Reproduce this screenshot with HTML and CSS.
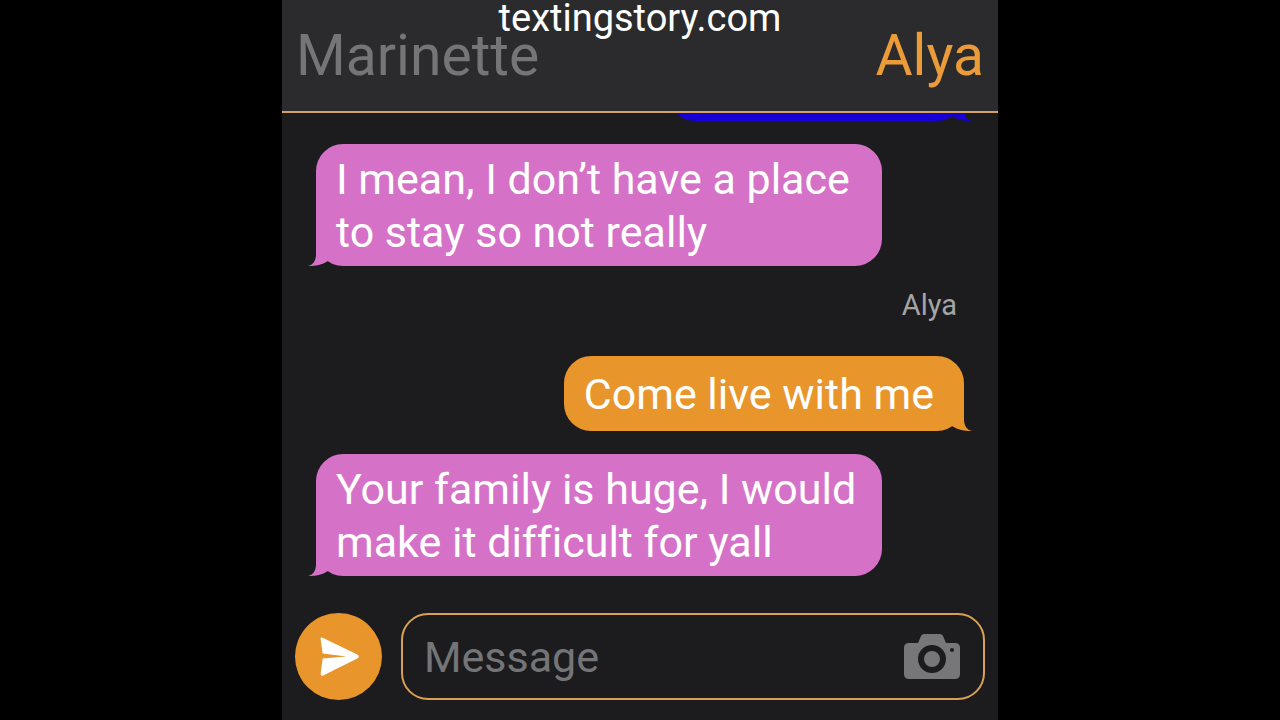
FILE: index.html
```html
<!DOCTYPE html>
<html lang="en">
<head>
  <meta charset="UTF-8" />
  <meta name="viewport" content="width=device-width, initial-scale=1.0" />
  <title>TextingStory</title>
  <link rel="stylesheet" href="styles.css">
</head>
<body>
  <div class="phone">
    <header class="header">
      <button class="name" type="button">Marinette</button>
      <button class="name active" type="button">Alya</button>
      <div class="watermark">textingstory.com</div>
    </header>

    <!-- Messages -->
    <main class="chat">
      <div class="bubble right blue"></div>
      <div class="bubble left pink"><p>I mean, I don’t have a place to stay so not really</p></div>
      <div class="sender">Alya</div>
      <div class="bubble right orange"><p>Come live with me</p></div>
      <div class="bubble left pink"><p>Your family is huge, I would make it difficult for yall</p></div>
    </main>

    <!-- Composer -->
    <form class="composer">
      <button class="send" type="button" aria-label="Send">
        <svg viewBox="0 0 88 88">
          <path d="M28 25 Q25 24 26 27 L28 41 L52 44 L28 46 L26 61 Q26 65 29 63 L63 46 Q66 44 63 42 Z" fill="#fff"/>
        </svg>
      </button>
      <div class="message-box">
        <input type="text" placeholder="Message" aria-label="Message">
        <button class="camera" type="button" aria-label="Camera">
          <svg viewBox="0 0 56 46" width="56" height="46">
            <path d="M5 9 H14 L17 2 Q18 0 20 0 H36 Q38 0 39 2 L42 9 H51 Q56 9 56 14 V40 Q56 45 51 45 H5 Q0 45 0 40 V14 Q0 9 5 9 Z" fill="#77777a"/>
            <circle cx="28" cy="25" r="11" fill="#77777a" stroke="#1c1c1e" stroke-width="6"/>
            <circle cx="48" cy="16" r="2" fill="#1c1c1e"/>
          </svg>
        </button>
      </div>
    </form>
  </div>
</body>
</html>
```
FILE: styles.css
```css
* {
  box-sizing: border-box;
}
body {
  font-family: Roboto, "Liberation Sans", sans-serif;
  font-variant-ligatures: none;
  background: #000;
  margin: 0;
}
button {
  font-family: inherit;
  padding: 0;
  border: none;
  background: none;
  cursor: pointer;
}
.phone {
  display: flex;
  flex-direction: column;
  max-width: 716px;
  height: 100vh;
  margin: 0 auto;
  background: #1c1c1e;
}
.header {
  position: relative;
  display: flex;
  justify-content: space-between;
  padding: 19px 14px 18px;
  background: #2b2b2d;
  border-bottom: 2px solid #d2a165;
}
.name {
  font-size: 57px;
  line-height: 74px;
  color: #757577;
}
.name.active {
  color: #eb9b38;
}
.watermark {
  position: absolute;
  top: 0;
  left: 0;
  right: 0;
  font-size: 38px;
  line-height: 36px;
  text-align: center;
  color: #fff;
}
.chat {
  flex: 1;
  min-height: 0;
  display: flex;
  flex-direction: column;
  justify-content: flex-end;
  gap: 23px;
  padding: 0 34px;
  overflow: hidden;
}
.bubble {
  position: relative;
  flex-shrink: 0;
  display: flex;
  align-items: center;
  max-width: 566px;
  min-height: 75px;
  padding: 9px 12px 7px 20px;
  border-radius: 27px;
  font-size: 43px;
  line-height: 53px;
  color: #fff;
}
.bubble p {
  margin: 0;
}
/* tail */
.bubble::after {
  content: "";
  position: absolute;
  bottom: 0;
  left: -8px;
  width: 24px;
  height: 28px;
  background: inherit;
  clip-path: path("M8 0 V16 C8 23 5 27 0 28 C8 28 14 27 20 23 L24 0 Z");
}
.left {
  align-self: flex-start;
}
.right {
  align-self: flex-end;
  padding-right: 30px;
}
.right::after {
  left: auto;
  right: -8px;
  transform: scaleX(-1);
}
.pink {
  background: #d572c8;
}
.orange {
  background: #e8952c;
}
.blue {
  width: 296px;
  background: #1600d5;
}
.sender {
  align-self: flex-end;
  padding: 0 7px 12px 0;
  font-size: 29px;
  line-height: 32px;
  color: #a5a5a8;
}
.composer {
  display: flex;
  gap: 19px;
  padding: 37px 13px 20px;
}
.send {
  flex-shrink: 0;
  width: 87px;
  height: 87px;
  border-radius: 50%;
  background: #e8952c;
}
.send svg,
.camera svg {
  display: block;
}
.message-box {
  flex: 1;
  min-width: 0;
  display: flex;
  align-items: center;
  padding: 0 23px 0 21px;
  border: 2px solid #d9a057;
  border-radius: 27px;
}
.message-box input {
  flex: 1;
  min-width: 0;
  padding: 0;
  border: none;
  outline: none;
  background: none;
  font-family: inherit;
  font-size: 43px;
  color: #fff;
}
.message-box input::placeholder {
  color: #757577;
}
```
